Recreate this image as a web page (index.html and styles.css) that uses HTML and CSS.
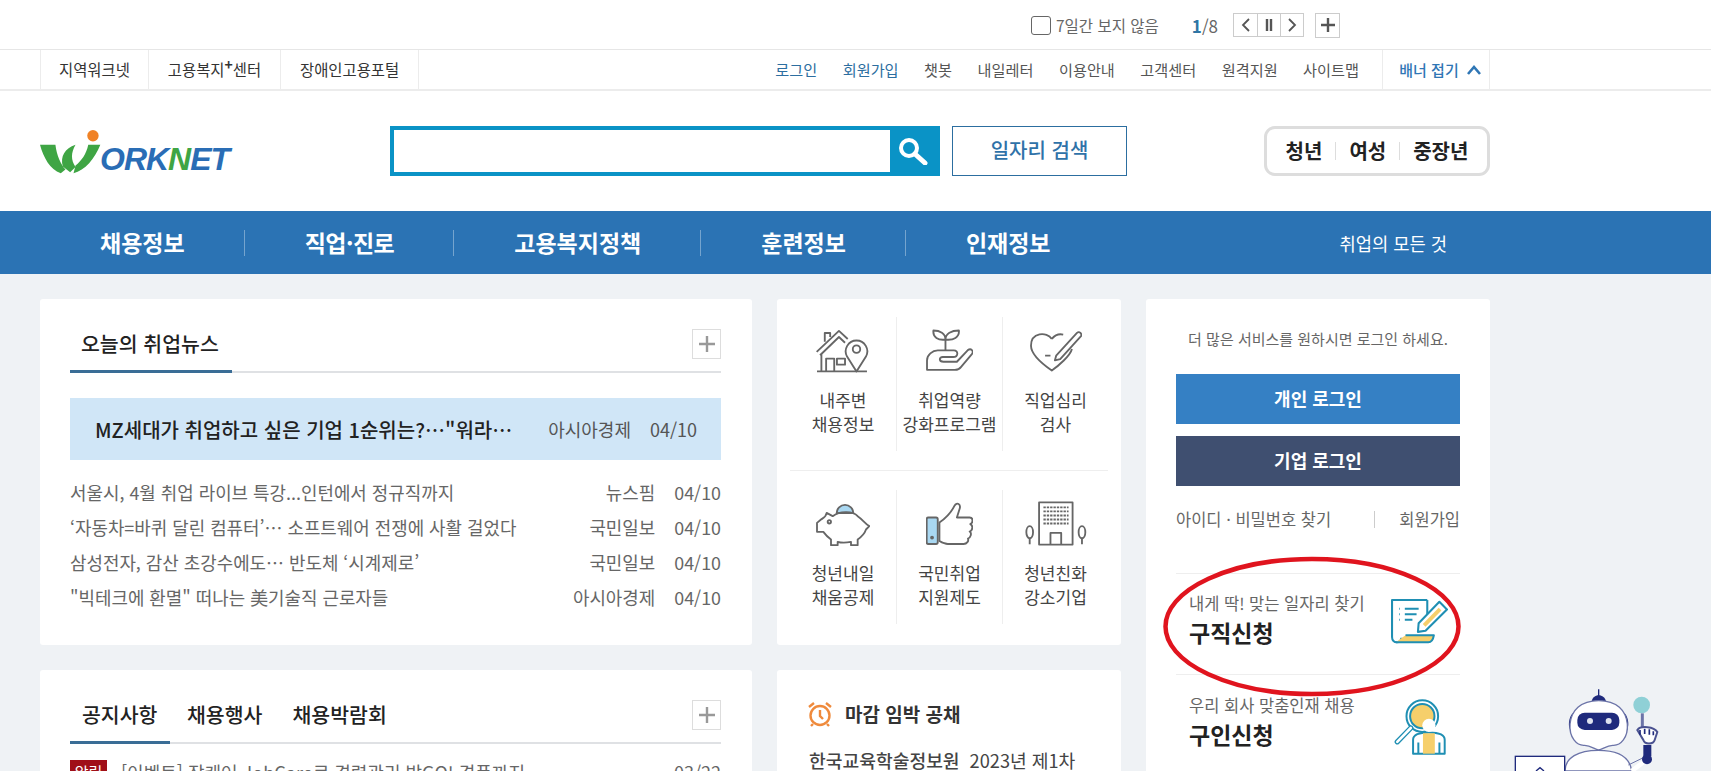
FILE: index.html
```html
<!DOCTYPE html>
<html lang="ko">
<head>
    <meta charset="UTF-8">
    <meta name="viewport" content="width=device-width, initial-scale=1.0">
    <title>워크넷</title>
    <link rel="stylesheet" href="styles.css">
</head>
<body>
    <div class="banner-bar">
        <div class="wrap banner-inner">
            <span class="check-box"></span>
            <span class="check-label">7일간 보지 않음</span>
            <span class="count"><b>1</b>/8</span>
            <div class="pager">
                <span class="pager-btn"><svg width="10" height="14" viewBox="0 0 10 14"><path d="M8 1L2 7l6 6" fill="none" stroke="#555" stroke-width="1.8"/></svg></span>
                <span class="pager-btn"><svg width="10" height="14" viewBox="0 0 10 14"><path d="M3 1v12M7 1v12" fill="none" stroke="#555" stroke-width="2.4"/></svg></span>
                <span class="pager-btn"><svg width="10" height="14" viewBox="0 0 10 14"><path d="M2 1l6 6-6 6" fill="none" stroke="#555" stroke-width="1.8"/></svg></span>
            </div>
            <span class="banner-plus"><svg width="14" height="14" viewBox="0 0 14 14"><path d="M7 0v14M0 7h14" stroke="#555" stroke-width="2.4"/></svg></span>
        </div>
    </div>

    <div class="util-bar">
        <div class="wrap util-inner">
            <ul class="family-links">
                <li>지역워크넷</li>
                <li>고용복지<sup>+</sup>센터</li>
                <li>장애인고용포털</li>
            </ul>
            <ul class="util-links">
                <li class="blue">로그인</li>
                <li class="blue">회원가입</li>
                <li>챗봇</li>
                <li>내일레터</li>
                <li>이용안내</li>
                <li>고객센터</li>
                <li>원격지원</li>
                <li>사이트맵</li>
            </ul>
            <div class="banner-toggle">배너 접기
                <svg width="14" height="10" viewBox="0 0 14 10"><path d="M1 9l6-7 6 7" fill="none" stroke="#2f76b5" stroke-width="2.6"/></svg>
            </div>
        </div>
    </div>

    <div class="header-bg">
        <header class="wrap site-header">
            <div class="logo">
                <svg class="logo-mark" width="62" height="47" viewBox="60 35 185 140">
                    <circle cx="218" cy="58" r="17" fill="#f08226"/>
                    <path d="M60 85h46c4 32 16 58 30 74l-14 11C90 160 70 122 60 85z" fill="#3fa544"/>
                    <path d="M128 150c-8-30 6-55 38-65-14 24-14 46 0 66l-16 16z" fill="#3fa544"/>
                    <path d="M160 170c34-8 64-44 80-85h-36c-6 28-20 48-38 62z" fill="#3fa544"/>
                </svg>
                <span class="logo-text">ORK<em>N</em>ET</span>
            </div>
            <div class="search-box">
                <div class="search-field"></div>
                <span class="search-btn">
                    <svg width="30" height="28" viewBox="0 0 30 28"><circle cx="11" cy="11" r="8" fill="none" stroke="#fff" stroke-width="4"/><path d="M17 17l10 9" stroke="#fff" stroke-width="5" stroke-linecap="round"/></svg>
                </span>
            </div>
            <a class="job-search">일자리 검색</a>
            <div class="target-box">
                <span>청년</span>
                <span>여성</span>
                <span>중장년</span>
            </div>
        </header>
    </div>

    <nav class="gnb">
        <div class="wrap gnb-inner">
            <a>채용정보</a>
            <a class="tight">직업·진로</a>
            <a>고용복지정책</a>
            <a>훈련정보</a>
            <a>인재정보</a>
            <span class="gnb-slogan">취업의 모든 것</span>
        </div>
    </nav>

    <main class="wrap content">
        <section class="card news-card">
            <div class="tab-head">
                <h2 class="tab on tab-news">오늘의 취업뉴스</h2>
                <span class="more-btn"><svg width="16" height="16" viewBox="0 0 16 16"><path d="M8 0v16M0 8h16" stroke="#999" stroke-width="2.4"/></svg></span>
            </div>
            <div class="news-top">
                <strong>MZ세대가 취업하고 싶은 기업 1순위는?…"워라…</strong>
                <span class="src">아시아경제</span>
                <span class="date">04/10</span>
            </div>
            <ul class="news-list">
                <li><span class="title">서울시, 4월 취업 라이브 특강...인턴에서 정규직까지</span><span class="src">뉴스핌</span><span class="date">04/10</span></li>
                <li><span class="title">‘자동차=바퀴 달린 컴퓨터’… 소프트웨어 전쟁에 사활 걸었다</span><span class="src">국민일보</span><span class="date">04/10</span></li>
                <li><span class="title">삼성전자, 감산 초강수에도… 반도체 ‘시계제로’</span><span class="src">국민일보</span><span class="date">04/10</span></li>
                <li><span class="title">"빅테크에 환멸" 떠나는 美기술직 근로자들</span><span class="src">아시아경제</span><span class="date">04/10</span></li>
            </ul>
        </section>

        <section class="card service-card">
            <div class="service-row">
                <a class="service">
                    <svg width="54" height="45" viewBox="0 0 160 132" class="line-icon"><path d="M3 128h148M2 70L68 8l26 24M12 80L68 26l18 17M26 40V14h16v12M16 76v52M30 128V90h24v38"/><rect x="62" y="90" width="24" height="18"/><path d="M120 128L92 84a32 32 0 1 1 56 0z" fill="#fff"/><circle cx="120" cy="62" r="11"/></svg>
                    <span>내주변<br>채용정보</span>
                </a>
                <a class="service">
                    <svg width="47" height="42" viewBox="0 0 140 125" class="line-icon"><path d="M58 62V30M58 30C58 12 42 3 22 3c-2 20 14 30 36 27zM58 30c0-18 18-27 40-27 2 20-16 30-40 27zM3 120V92c0-16 16-30 32-30h48c14 0 14 20-2 20H50c-12 0-12 14 2 14h40l32-34c10-8 20 2 12 12l-32 38c-4 6-10 8-18 8z"/></svg>
                    <span>취업역량<br>강화프로그램</span>
                </a>
                <a class="service">
                    <svg width="52" height="42" viewBox="0 0 155 125" class="line-icon"><path d="M65 28C50 5 3 8 3 48c0 27 42 60 62 74 20-14 55-44 60-64M65 28c8-10 20-16 34-13M78 78l62-68c8-7 18 5 10 12L90 88l-16 4zM45 78h16"/></svg>
                    <span>직업심리<br>검사</span>
                </a>
            </div>
            <div class="service-row row-second">
                <a class="service">
                    <svg width="54" height="45" viewBox="0 0 162 134" class="line-icon"><path d="M62 36a25 25 0 0 1 50 0z" fill="#a9d8f2"/><path d="M32 35l18 10c20-15 60-17 75 0 15 10 25 25 35 30l-10 10c-5 15-15 23-25 30v17h-20v-10c-15 3-30 3-40 0v10H45v-17c-10-7-17-15-23-23H3V65l12-10c7-5 15-7 17-20z"/><circle cx="40" cy="62" r="5"/></svg>
                    <span>청년내일<br>채움공제</span>
                </a>
                <a class="service">
                    <svg width="47" height="42" viewBox="0 0 140 126" class="line-icon"><rect x="2" y="45" width="33" height="79" rx="5" fill="#a9d8f2"/><circle cx="18" cy="105" r="3" fill="#555"/><path d="M40 60c15-10 35-30 45-50 7-12 20-5 15 10l-8 25h38c12 0 10 17 2 20 10 5 6 20-2 22 8 5 2 19-5 21 3 7-3 16-13 16H65c-10 0-20-6-25-9z"/></svg>
                    <span>국민취업<br>지원제도</span>
                </a>
                <a class="service">
                    <svg width="62" height="45" viewBox="0 0 185 132" class="line-icon"><rect x="42" y="3" width="100" height="126"/><path d="M55 18h75M55 30h75M55 42h75M55 54h75M55 66h75" stroke-dasharray="7 3"/><path d="M76 129V94h32v35"/><ellipse cx="14" cy="92" rx="10" ry="18"/><path d="M14 110v18"/><ellipse cx="170" cy="92" rx="10" ry="18"/><path d="M170 110v18"/></svg>
                    <span>청년친화<br>강소기업</span>
                </a>
            </div>
        </section>

        <aside class="card login-card">
            <p class="login-msg">더 많은 서비스를 원하시면 로그인 하세요.</p>
            <a class="login-btn personal">개인 로그인</a>
            <a class="login-btn company">기업 로그인</a>
            <div class="login-links">
                <span>아이디 · 비밀번호 찾기</span>
                <span class="sep"></span>
                <span class="join">회원가입</span>
            </div>
            <a class="apply first">
                <span class="apply-text"><small>내게 딱! 맞는 일자리 찾기</small><strong>구직신청</strong></span>
                <svg width="57" height="45" viewBox="0 0 165 130" class="apply-icon"><path d="M105 3H3v107c0 20 27 20 27 2" fill="#fff"/><path d="M105 3v60"/><path d="M42 105h82c-2 12-8 20-16 20H14" fill="#f6cf6b"/><path d="M24 28h2M24 44h2M24 60h2M40 28h40M40 44h34M40 60h22"/><path d="M80 70l60-62 22 22-62 62-22 3z" fill="#fff"/><path d="M92 72l46-47 8 8-46 47z" fill="#f6cf6b" stroke="none"/></svg>
            </a>
            <a class="apply">
                <span class="apply-text"><small>우리 회사 맞춤인재 채용</small><strong>구인신청</strong></span>
                <svg width="54" height="56" viewBox="0 0 160 170" class="apply-icon person-icon"><circle cx="90" cy="52" r="48" fill="#fff"/><circle cx="90" cy="52" r="37" fill="#f6cf6b"/><path d="M55 88L14 130" stroke-width="16" stroke-linecap="round"/><path d="M55 88L14 130" stroke="#fff" stroke-width="8" stroke-linecap="round"/><path d="M62 166v-42c0-14 18-22 48-22s48 8 48 22v42z" fill="#fff"/><path d="M92 104h36v62H92z" fill="#f6cf6b" stroke="none"/><path d="M78 166v-34M142 166v-34"/><circle cx="110" cy="80" r="20" fill="#fff" stroke="none"/></svg>
            </a>
        </aside>

        <section class="card notice-card">
            <div class="tab-head">
                <h2 class="tab on tab-notice">공지사항</h2>
                <h2 class="tab">채용행사</h2>
                <h2 class="tab">채용박람회</h2>
                <span class="more-btn"><svg width="16" height="16" viewBox="0 0 16 16"><path d="M8 0v16M0 8h16" stroke="#999" stroke-width="2.4"/></svg></span>
            </div>
            <div class="notice-row">
                <span class="badge">알림</span>
                <span class="title">[이벤트] 잡케어 JobCare로 경력관리 받GO! 경품까지</span>
                <span class="date">03/22</span>
            </div>
        </section>

        <section class="card deadline-card">
            <h2 class="deadline-title">
                <svg width="26" height="26" viewBox="0 0 26 26"><circle cx="13" cy="14.500" r="9.500" fill="none" stroke="#ef8a3c" stroke-width="2.400"/><path d="M13 9v6l3 3M2 6l5-4M24 6l-5-4M6 23l-2 2M20 23l2 2" fill="none" stroke="#ef8a3c" stroke-width="2.400"/></svg>
                마감 임박 공채
            </h2>
            <p class="deadline-item"><span>한국교육학술정보원</span><span>2023년 제1차</span></p>
        </section>
    </main>

    <svg class="oval" width="298" height="141" viewBox="0 0 298 141"><ellipse cx="149" cy="70.500" rx="146.500" ry="67.500" fill="none" stroke="#e0141e" stroke-width="4.500"/></svg>

    <svg class="robot" width="180" height="91" viewBox="0 0 540 273">
        <path d="M296 28v20" stroke="#1f2a7c" stroke-width="4"/>
        <path d="M275 65c2-26 40-26 43 0z" fill="#1f2a7c"/>
        <path d="M195 273c0-40 40-62 100-62s95 22 100 62z" fill="#fff" stroke="#6c74a8" stroke-width="4"/>
        <path d="M226 95c-20 5-26 50-10 60zM366 95c20 5 26 50 10 60z" fill="#1f2a7c"/>
        <path d="M296 62c55 0 82 30 86 70 3 40-20 66-44 64-18 0-30 12-42 14-12-2-24-14-42-14-24 2-47-24-44-64 4-40 31-70 86-70z" fill="#fff" stroke="#6c74a8" stroke-width="4"/>
        <rect x="232" y="98" width="126" height="52" rx="22" fill="#1f2a7c"/>
        <circle cx="270" cy="123" r="9" fill="#dfe3ef"/>
        <circle cx="326" cy="123" r="9" fill="#dfe3ef"/>
        <circle cx="425" cy="75" r="25" fill="#8fd0d6"/>
        <path d="M427 100v42" stroke="#6c74a8" stroke-width="9"/>
        <path d="M412 150c10-14 50-10 60 6l-8 24c-4 14-30 14-34 0z" fill="#fff" stroke="#4a5290" stroke-width="6"/>
        <path d="M420 150v14M434 146v16M448 148v16M460 154v12" stroke="#1f2a7c" stroke-width="5"/>
        <path d="M430 195h24v34h-24z" fill="#1f2a7c"/>
        <path d="M395 273l40-30" stroke="#fff" stroke-width="14"/>
        <path d="M385 255l45-22" stroke="#6c74a8" stroke-width="3"/>
        <circle cx="441" cy="238" r="15" fill="#1f2a7c"/>
        <rect x="46" y="229" width="148" height="60" fill="#fff" stroke="#1f2a7c" stroke-width="4"/>
        <path d="M108 273l12-10 12 10" fill="none" stroke="#1f2a7c" stroke-width="4"/>
    </svg>
</body>
</html>
```

FILE: styles.css
```css
* {
    margin: 0;
    padding: 0;
    box-sizing: border-box;
}

html, body {
    height: 771px;
    overflow: hidden;
}

body {
    background: #eff2f5;
    color: #333;
    font-family: "Noto Sans CJK KR", "Noto Sans", sans-serif;
    position: relative;
}

ul {
    list-style: none;
}

.wrap {
    width: 1450px;
    margin-left: 40px;
}

/* top banner control */
.banner-bar {
    background: #fff;
    height: 50px;
    border-bottom: 1px solid #e6e6e6;
}

.banner-inner {
    display: flex;
    align-items: center;
    height: 50px;
    padding-left: 991px;
    font-size: 15.500px;
    color: #666;
}

.check-box {
    width: 20px;
    height: 19px;
    border: 1px solid #666;
    border-radius: 3px;
    margin-right: 5px;
}

.count {
    margin-left: 33px;
    font-size: 17px;
}

.count b {
    color: #2f76a5;
    font-weight: 700;
}

.pager {
    display: flex;
    margin-left: 15px;
    border: 1px solid #ccc;
    height: 24px;
}

.pager-btn {
    width: 23px;
    display: flex;
    align-items: center;
    justify-content: center;
}

.pager-btn + .pager-btn {
    border-left: 1px solid #ccc;
}

.banner-plus {
    width: 25px;
    height: 25px;
    margin-left: 11px;
    border: 1px solid #ccc;
    display: flex;
    align-items: center;
    justify-content: center;
}

/* utility links */
.util-bar {
    background: #fff;
    height: 41px;
    border-bottom: 2px solid #ececec;
}

.util-inner {
    display: flex;
    height: 39px;
    font-size: 15.200px;
}

.family-links {
    display: flex;
    border-left: 1px solid #ececec;
}

.family-links li {
    padding: 0 18px;
    line-height: 38px;
    border-right: 1px solid #ececec;
    color: #333;
    font-size: 15.400px;
}

.family-links li:nth-child(2) {
    padding: 0 19px;
}

.family-links li:nth-child(3) {
    padding: 0 19px;
}

.family-links sup {
    font-size: 14px;
    line-height: 0;
    font-weight: 700;
}

.util-links {
    display: flex;
    gap: 25.500px;
    margin-left: auto;
    line-height: 38px;
    color: #555;
}

.util-links .blue {
    color: #2c6ea0;
}

.banner-toggle {
    width: 108px;
    margin-left: 23px;
    padding-left: 8px;
    border-left: 1px solid #ececec;
    border-right: 1px solid #ececec;
    display: flex;
    align-items: center;
    justify-content: center;
    gap: 8px;
    color: #2f76b5;
    font-weight: 500;
    font-size: 15px;
}

/* logo, search */
.header-bg {
    background: #fff;
}

.site-header {
    display: flex;
    align-items: center;
    height: 120px;
}

.logo {
    width: 350px;
    display: flex;
    align-items: flex-end;
}

.logo-mark {
    flex: none;
    margin-right: -2px;
}

.logo-text {
    font-family: "Liberation Sans", sans-serif;
    font-weight: 700;
    font-style: italic;
    font-size: 32px;
    line-height: 32px;
    letter-spacing: -1px;
    color: #2a6db5;
}

.logo-text em {
    color: #3fa544;
}

.search-box {
    width: 550px;
    height: 50px;
    display: flex;
    border: 4px solid #0a93c6;
}

.search-field {
    flex: 1;
    background: #fff;
}

.search-btn {
    width: 46px;
    background: #0a93c6;
    display: flex;
    align-items: center;
    justify-content: center;
}

.job-search {
    width: 175px;
    height: 50px;
    margin-left: 12px;
    border: 1px solid #2c6ea0;
    color: #2f72a8;
    font-size: 20px;
    font-weight: 500;
    line-height: 46px;
    text-align: center;
}

.target-box {
    width: 226px;
    height: 50px;
    margin-left: auto;
    border: 3px solid #dddddd;
    border-radius: 11px;
    display: flex;
    align-items: center;
    justify-content: center;
    font-size: 20px;
    font-weight: 700;
    color: #222;
}

.target-box span {
    padding: 0 13px;
    line-height: 18px;
}

.target-box span + span {
    border-left: 1px solid #ddd;
}

/* main menu */
.gnb {
    background: #2b73b4;
    height: 63px;
}

.gnb-inner {
    display: flex;
    align-items: center;
    height: 63px;
    color: #fff;
}

.gnb-inner a {
    padding: 0 59px 0 60px;
    height: 26px;
    line-height: 24px;
    font-size: 23px;
    font-weight: 700;
    border-right: 1px solid rgba(255, 255, 255, 0.35);
}

.gnb-inner .tight {
    letter-spacing: -0.5px;
}

.gnb-inner a:nth-child(5) {
    border-right: none;
}

.gnb-slogan {
    margin-left: auto;
    padding-right: 43px;
    font-size: 17.700px;
}

/* cards */
.content {
    display: grid;
    grid-template-columns: 712px 344px 344px;
    grid-template-rows: 346px 400px;
    column-gap: 25px;
    row-gap: 25px;
    padding-top: 25px;
}

.card {
    background: #fff;
    border-radius: 3px;
}

.news-card, .notice-card {
    padding: 30px 31px 0 30px;
}

.tab-head {
    display: flex;
    align-items: flex-start;
    height: 44px;
    border-bottom: 2px solid #dfe1e4;
}

.tab {
    font-size: 20.500px;
    font-weight: 500;
    line-height: 29px;
    color: #222;
    height: 44px;
    padding: 0 15px;
    white-space: nowrap;
}

.tab.on {
    border-bottom: 3px solid #3a6d96;
}

.tab-news {
    width: 162px;
    padding: 0 11px;
}

.tab-notice {
    width: 100px;
    padding: 0 12px;
    margin-right: 2px;
}

.more-btn {
    width: 29px;
    height: 30px;
    margin-left: auto;
    border: 1px solid #ddd;
    display: flex;
    align-items: center;
    justify-content: center;
}

.news-top {
    display: flex;
    align-items: center;
    height: 62px;
    margin-top: 25px;
    padding: 0 24px 0 25px;
    background: #d0e6f7;
    font-size: 18px;
    color: #555;
}

.news-top strong {
    flex: 1;
    font-size: 20px;
    font-weight: 500;
    color: #222;
    white-space: nowrap;
    overflow: hidden;
}

.news-top .date {
    margin-left: 19px;
}

.news-list {
    margin-top: 15px;
    font-size: 17.900px;
    color: #666;
}

.news-list li {
    display: flex;
    height: 35px;
    line-height: 35px;
}

.news-list .title {
    flex: 1;
}

.news-list .date {
    margin-left: 19px;
}

/* service icons */
.service-card {
    padding: 18px 0 0;
}

.service-row {
    display: flex;
    justify-content: center;
    margin: 0 13px;
}

.row-second {
    margin-top: 19px;
    padding-top: 19px;
    border-top: 1px solid #eeeeee;
}

.service {
    width: 106px;
    height: 134px;
    display: flex;
    flex-direction: column;
    align-items: center;
    text-align: center;
    font-size: 17px;
    line-height: 24px;
    color: #444;
    padding-top: 11px;
    white-space: nowrap;
}

.service + .service {
    border-left: 1px solid #eeeeee;
}

.service svg {
    height: 45px;
    margin-bottom: 15px;
}

.line-icon {
    fill: none;
    stroke: #666;
    stroke-width: 5.500;
    stroke-linejoin: round;
}

/* login */
.login-card {
    grid-column: 3;
    grid-row: 1 / 3;
    padding: 28px 30px 0;
}

.login-msg {
    font-size: 15px;
    line-height: 24px;
    color: #666;
    text-align: center;
    white-space: nowrap;
}

.login-btn {
    display: block;
    height: 50px;
    line-height: 48px;
    margin-top: 12px;
    text-align: center;
    color: #fff;
    font-size: 18px;
    font-weight: 700;
}

.personal {
    margin-top: 23px;
    background: #3580c4;
}

.company {
    background: #3f4f70;
}

.login-links {
    display: flex;
    align-items: center;
    margin-top: 21px;
    font-size: 16.500px;
    color: #666;
    line-height: 24px;
}

.sep {
    width: 1px;
    height: 17px;
    background: #ccc;
    margin-left: 43px;
}

.join {
    margin-left: auto;
}

.apply {
    display: flex;
    justify-content: space-between;
    align-items: center;
    height: 101px;
    padding: 0 13px 4px;
    border-top: 1px solid #eeeeee;
}

.first {
    margin-top: 42px;
    padding-bottom: 6px;
}

.apply-text {
    display: flex;
    flex-direction: column;
}

.apply small {
    font-size: 16.500px;
    color: #666;
    line-height: 22px;
}

.apply strong {
    font-size: 23px;
    font-weight: 700;
    color: #222;
    line-height: 36px;
}

.apply-icon {
    fill: none;
    stroke: #1f8fb3;
    stroke-width: 6;
    stroke-linejoin: round;
    margin-right: -1px;
}

.person-icon {
    margin: 8px 1px 0 0;
}

/* notices */
.notice-row {
    display: flex;
    align-items: center;
    margin-top: 16px;
    font-size: 18px;
    color: #666;
    line-height: 24px;
}

.badge {
    width: 37px;
    background: #a00f18;
    color: #fff;
    font-size: 15px;
    text-align: center;
    margin-right: 14px;
}

.notice-row .title {
    flex: 1;
}

/* closing soon */
.deadline-card {
    padding: 29px 30px 0 32px;
}

.deadline-title {
    display: flex;
    align-items: center;
    gap: 12px;
    margin-left: -2px;
    font-size: 19px;
    font-weight: 700;
    color: #333;
    line-height: 30px;
}

.deadline-item {
    display: flex;
    gap: 10px;
    margin-top: 18px;
    font-size: 18.200px;
    line-height: 26px;
    color: #444;
    white-space: nowrap;
}

.deadline-item span:first-child {
    font-weight: 500;
}

/* overlays */
.oval {
    position: absolute;
    left: 1163px;
    top: 556px;
}

.robot {
    position: absolute;
    left: 1500px;
    top: 680px;
}
```
